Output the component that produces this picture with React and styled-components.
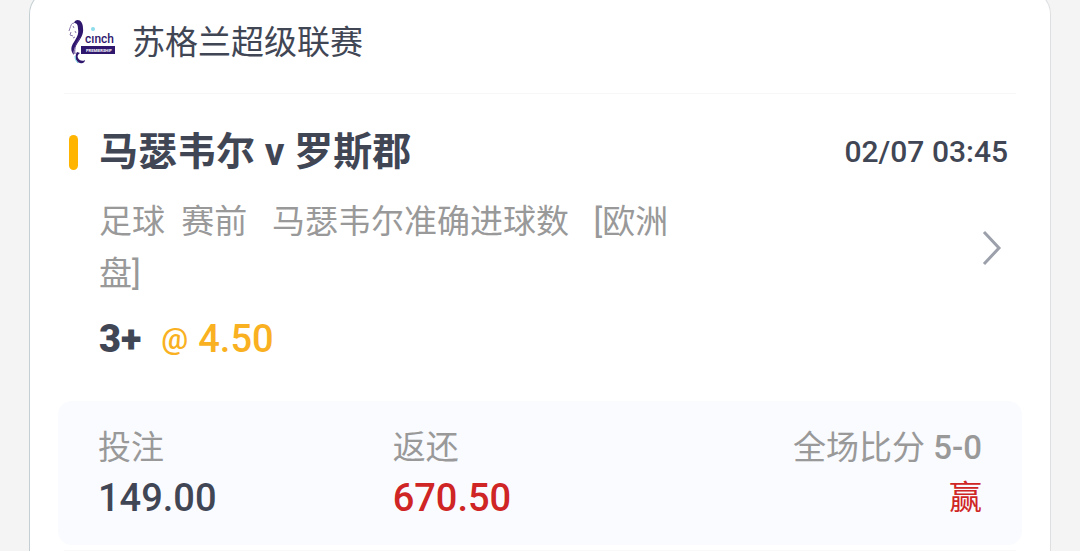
import React from "react";

import styled, { createGlobalStyle } from "styled-components";

const GlobalStyle = createGlobalStyle`
    * {
        box-sizing: border-box;
    }
    body {
        margin: 0;
        background: #f4f4f4;
        color: #414655;
        font-family: Roboto, "Noto Sans CJK SC", sans-serif;
    }
`;

const Page = styled.main`
    min-height: 100vh;
    padding: 0 29px;
    display: flex;
    flex-direction: column;
    overflow: hidden;
`;

const Card = styled.article`
    flex: 1;
    margin-top: -10px;
    padding: 0 28px;
    background: #fff;
    border: 1px solid #dedfe1;
    border-left-color: #c3cfd3;
    border-bottom: none;
    border-radius: 24px 24px 0 0;
`;

const Header = styled.header`
    display: flex;
    align-items: center;
    gap: 16px;
    height: 103px;
    margin: 0 6px;
    padding-left: 4px;
    border-bottom: 1px solid #f7f7f8;
`;

const League = styled.h2`
    margin: 0;
    padding-top: 2px;
    font-size: 33px;
    line-height: 48px;
    font-weight: 400;
`;

const Body = styled.section`
    padding: 28px 14px 35px 11px;
`;

const TitleRow = styled.div`
    display: flex;
    align-items: center;
    gap: 21px;

    &::before {
        content: "";
        width: 9px;
        height: 35px;
        border-radius: 5px;
        background: #ffb400;
    }
    h1 {
        flex: 1;
        margin: 0;
        font-size: 39px;
        line-height: 60px;
        font-weight: 700;
    }
    time {
        font-size: 30px;
        line-height: 56px;
        font-weight: 500;
    }
`;

const Detail = styled.div`
    display: flex;
    align-items: center;
    justify-content: space-between;
    padding: 14px 6px 12px 30px;
`;

const Meta = styled.p`
    width: 66%;
    margin: 0;
    color: #999;
    font-size: 33px;
    line-height: 52px;
    white-space: pre-wrap;
`;

const MoreButton = styled.button`
    display: flex;
    padding: 0;
    border: none;
    background: none;
    color: #9ba0ab;
    cursor: pointer;
`;

const Odds = styled.div`
    display: flex;
    align-items: center;
    gap: 20px;
    padding-left: 30px;
    font-size: 38px;
    line-height: 54px;
    font-weight: 500;

    strong {
        font-weight: 900;
    }
    span {
        display: flex;
        gap: 10px;
        color: #f9b122;
    }
    small {
        font-size: 30px;
    }
`;

const Summary = styled.dl`
    display: grid;
    grid-template-columns: 1fr 1fr 1fr;
    margin: 0;
    padding: 22px 40px;
    border-radius: 14px;
    background: #fafbff;
`;

const Item = styled.div`
    text-align: ${(props) => props.$align || "left"};

    dt {
        color: #999;
        font-size: 33px;
        line-height: 50px;
    }
    dt b {
        font-weight: 500;
    }
    dd {
        margin: 0;
        color: ${(props) => props.$color || "#414655"};
        font-size: ${(props) => (props.$small ? "33px" : "38px")};
        line-height: 50px;
        font-weight: ${(props) => (props.$small ? 400 : 500)};
    }
`;

const Footer = styled.footer`
    margin: 5px 6px 0;
    border-top: 1px solid #f9f9fa;
`;

const Logo = () => (
    <svg width="48" height="48" viewBox="0 0 48 48" role="img" aria-label="cinch Premiership">
        <path
            d="M7 3 C11 0 15 4 15 10 C16 17 12 21 9 26 C6 30 5 33 6 37 C2 33 3 28 6 24 C9 19 11 16 10 11 C10 7 9 5 6 5Z"
            fill="#2f176d"
        />
        <path
            d="M6 5 C3 5 3 8 2 10 L1 13 M3 14 L2 17 L5 18 M5 8 L6 10 M7 13 L8 15 M5 20 L7 19"
            fill="none"
            stroke="#8b78ac"
            strokeWidth="1"
        />
        <path d="M12 20 C8 25 6 30 7 36" fill="none" stroke="#56398d" strokeWidth="1" />
        <path d="M9 34 C6 39 8 44 12 45 C15 46 17 44 17 42 C14 44 11 42 10 40 C9 38 10 36 12 35Z" fill="#2f176d" />
        <path d="M7 38 C7 41 8 43 10 45" fill="none" stroke="#72d3e7" strokeWidth="1" />
        <text x="17" y="25" fontFamily="Roboto" fontSize="12" fontWeight="500" fill="#2f176d">
            cınch
        </text>
        <circle cx="25" cy="11" r="2" fill="#8cdcec" />
        <rect x="13" y="28" width="34" height="8" fill="#2f176d" />
        <text x="18" y="34" fontFamily="Roboto" fontSize="4" fontWeight="700" fill="#fff">
            PREMIERSHIP
        </text>
    </svg>
);

const App = () => {
    return (
        <>
            <GlobalStyle />
            <Page>
                <Card>
                    <Header>
                        <Logo />
                        <League>苏格兰超级联赛</League>
                    </Header>
                    <Body>
                        <TitleRow>
                            <h1>马瑟韦尔 v 罗斯郡</h1>
                            <time>02/07 03:45</time>
                        </TitleRow>
                        <Detail>
                            <Meta>{"足球  赛前   马瑟韦尔准确进球数   [欧洲盘]"}</Meta>
                            <MoreButton type="button" aria-label="查看详情">
                                <svg width="20" height="38" viewBox="0 0 20 38">
                                    <path
                                        d="M2 3 L17 19 L2 35"
                                        fill="none"
                                        stroke="currentColor"
                                        strokeWidth="3"
                                    />
                                </svg>
                            </MoreButton>
                        </Detail>
                        <Odds>
                            <strong>3+</strong>
                            <span>
                                <small>@</small>4.50
                            </span>
                        </Odds>
                    </Body>
                    <Summary>
                        <Item>
                            <dt>投注</dt>
                            <dd>149.00</dd>
                        </Item>
                        <Item $color="#cf2525">
                            <dt>返还</dt>
                            <dd>670.50</dd>
                        </Item>
                        <Item $align="right" $color="#cf2525" $small>
                            <dt>
                                全场比分 <b>5-0</b>
                            </dt>
                            <dd>赢</dd>
                        </Item>
                    </Summary>
                    <Footer />
                </Card>
            </Page>
        </>
    );
};

export default App;
